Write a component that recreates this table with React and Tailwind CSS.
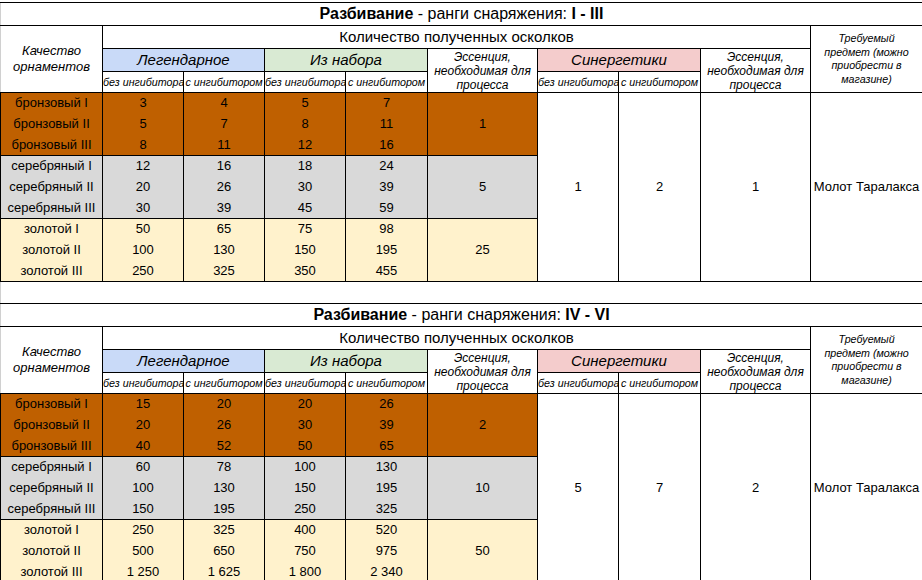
import React from "react";

const first = {
  ranks: "I - III",
  tiers: [
    {
      name: "бронзовый",
      bg: "bg-[#bf6000]",
      ess: "1",
      rows: [
        ["3", "4", "5", "7"],
        ["5", "7", "8", "11"],
        ["8", "11", "12", "16"],
      ],
    },
    {
      name: "серебряный",
      bg: "bg-[#d9d9d9]",
      ess: "5",
      rows: [
        ["12", "16", "18", "24"],
        ["20", "26", "30", "39"],
        ["30", "39", "45", "59"],
      ],
    },
    {
      name: "золотой",
      bg: "bg-[#fff2cc]",
      ess: "25",
      rows: [
        ["50", "65", "75", "98"],
        ["100", "130", "150", "195"],
        ["250", "325", "350", "455"],
      ],
    },
  ],
  synA: "1",
  synB: "2",
  ess2: "1",
};

const second = {
  ranks: "IV - VI",
  tiers: [
    {
      name: "бронзовый",
      bg: "bg-[#bf6000]",
      ess: "2",
      rows: [
        ["15", "20", "20", "26"],
        ["20", "26", "30", "39"],
        ["40", "52", "50", "65"],
      ],
    },
    {
      name: "серебряный",
      bg: "bg-[#d9d9d9]",
      ess: "10",
      rows: [
        ["60", "78", "100", "130"],
        ["100", "130", "150", "195"],
        ["150", "195", "250", "325"],
      ],
    },
    {
      name: "золотой",
      bg: "bg-[#fff2cc]",
      ess: "50",
      rows: [
        ["250", "325", "400", "520"],
        ["500", "650", "750", "975"],
        ["1 250", "1 625", "1 800", "2 340"],
      ],
    },
  ],
  synA: "5",
  synB: "7",
  ess2: "2",
};

const numerals = ["I", "II", "III"];

const Essence = () => (
  <>
    Эссенция,
    <br />
    необходимая для
    <br />
    процесса
  </>
);

const Sub = ({ children }) => (
  <td className="p-0 border border-black text-center italic text-[10.7px] leading-[14px] whitespace-nowrap overflow-hidden">
    {children}
  </td>
);

const DataTable = ({ data }) => {
  return (
    <table className="table-fixed border-collapse w-[922px] text-black">
      <colgroup>
        <col className="w-[102px]" />
        <col className="w-[81px]" />
        <col className="w-[81px]" />
        <col className="w-[81px]" />
        <col className="w-[82px]" />
        <col className="w-[110px]" />
        <col className="w-[81px]" />
        <col className="w-[82px]" />
        <col className="w-[110px]" />
        <col className="w-[112px]" />
      </colgroup>
      <tbody>
        <tr className="h-[23px]">
          <td
            colSpan={10}
            className="p-0 border border-black border-l-[#d0d0d0] text-center text-[16px] leading-[18px]"
          >
            <b>Разбивание</b> - ранги снаряжения: <b>{data.ranks}</b>
          </td>
        </tr>
        <tr className="h-[23px]">
          <td
            rowSpan={3}
            className="p-0 border border-black border-l-[#d0d0d0] text-center italic text-[13px] leading-[16px]"
          >
            Качество
            <br />
            орнаментов
          </td>
          <td colSpan={8} className="p-0 border border-black text-center text-[15px] leading-[18px]">
            Количество полученных осколков
          </td>
          <td
            rowSpan={3}
            className="p-0 border border-black text-center italic text-[10.7px] leading-[13.5px]"
          >
            Требуемый
            <br />
            предмет (можно
            <br />
            приобрести в
            <br />
            магазине)
          </td>
        </tr>
        <tr className="h-[23px]">
          <td colSpan={2} className="p-0 border border-black bg-[#c9daf8] text-center italic text-[15px] leading-[18px]">
            Легендарное
          </td>
          <td colSpan={2} className="p-0 border border-black bg-[#d9ead3] text-center italic text-[15px] leading-[18px]">
            Из набора
          </td>
          <td rowSpan={2} className="p-0 border border-black text-center italic text-[12px] leading-[14px]">
            <Essence />
          </td>
          <td colSpan={2} className="p-0 border border-black bg-[#f4cccc] text-center italic text-[15px] leading-[18px]">
            Синергетики
          </td>
          <td rowSpan={2} className="p-0 border border-black text-center italic text-[12px] leading-[14px]">
            <Essence />
          </td>
        </tr>
        <tr className="h-[21px]">
          <Sub>без ингибитора</Sub>
          <Sub>с ингибитором</Sub>
          <Sub>без ингибитора</Sub>
          <Sub>с ингибитором</Sub>
          <Sub>без ингибитора</Sub>
          <Sub>с ингибитором</Sub>
        </tr>
        {data.tiers.map((t, i) =>
          t.rows.map((r, j) => {
            const edge = `${j === 0 ? "border-t" : ""} ${j === 2 ? "border-b" : ""}`;
            return (
              <tr key={`${i}-${j}`} className="h-[21px] text-[13px] leading-[16px]">
                <td className={`p-0 border-x border-black text-center ${t.bg} ${edge}`}>
                  {t.name} {numerals[j]}
                </td>
                {r.map((v, k) => (
                  <td key={k} className={`p-0 border-x border-black text-center ${t.bg} ${edge}`}>
                    {v}
                  </td>
                ))}
                {j === 0 && (
                  <td rowSpan={3} className={`p-0 border border-black text-center ${t.bg}`}>
                    {t.ess}
                  </td>
                )}
                {i === 0 && j === 0 && (
                  <>
                    <td rowSpan={9} className="p-0 border border-black text-center">
                      {data.synA}
                    </td>
                    <td rowSpan={9} className="p-0 border border-black text-center">
                      {data.synB}
                    </td>
                    <td rowSpan={9} className="p-0 border border-black text-center">
                      {data.ess2}
                    </td>
                    <td rowSpan={9} className="p-0 border border-black text-center whitespace-nowrap">
                      Молот Таралакса
                    </td>
                  </>
                )}
              </tr>
            );
          })
        )}
      </tbody>
    </table>
  );
};

export default function App() {
  return (
    <div className="w-[922px] h-[580px] overflow-hidden bg-white pt-[2px] font-['Liberation_Sans',Arial,sans-serif]">
      <DataTable data={first} />
      <div className="h-[21px] border-l border-[#d0d0d0]" />
      <DataTable data={second} />
    </div>
  );
}
